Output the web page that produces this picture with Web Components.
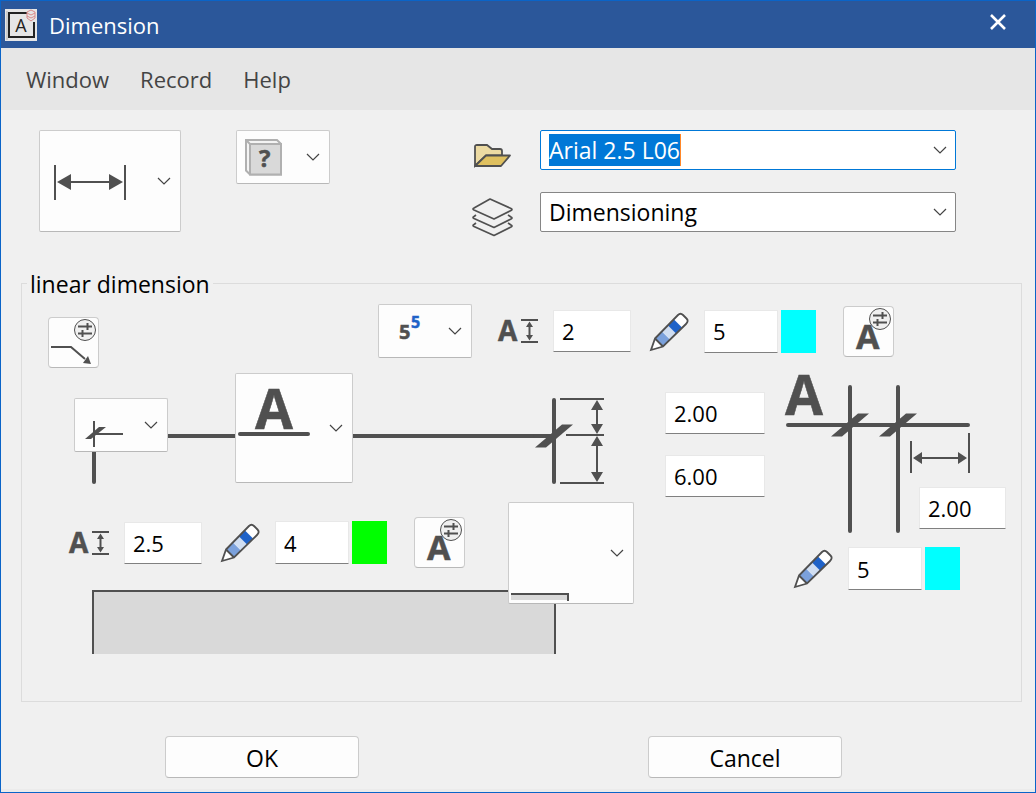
<!DOCTYPE html>
<html lang="en">
<head>
<meta charset="utf-8">
<meta name="viewport" content="width=device-width">
<title>Dimension</title>
<style>
html, body { margin: 0; min-height: 100%; }
body { min-height: 100vh; display: flex; background: #f0f0f0; font: 22px/30px "Open Sans", "Noto Sans", sans-serif; color: #000; }
</style>
</head>
<body>
<dimension-dialog></dimension-dialog>
<script>
const INK = '#505050';

const knobs = `
  <circle cx="36" cy="12" r="10.5" fill="#f0f0f0" stroke="${INK}"/>
  <path d="M29 8.5H43M29 15.5H43" stroke="${INK}" stroke-width="2"/>
  <path d="M38.5 5V12M33.5 12V19" stroke="${INK}" stroke-width="2"/>`;

const letter = (x, y, size, text = 'A', fill = INK) =>
  `<text x="${x}" y="${y}" font-family="Open Sans, Noto Sans, sans-serif" font-weight="700" font-size="${size}" fill="${fill}" stroke="${fill}" stroke-width=".5">${text}</text>`;

/* name: [width, height, drawing] */
const ICONS = {
  app: [32, 32, `<path fill="#e6e6e6" d="M0 0H32V32H0Z"/><path fill="none" stroke="#b4b4b4" d="M2 31V2"/><path d="M22 4H4V28H29V13" fill="none" stroke="#222" stroke-width="2"/>
    <text x="16" y="23" text-anchor="middle" font-family="Open Sans, sans-serif" font-size="18" fill="#222">A</text>
    <g fill="none" stroke="#d98a8a"><path d="M22 3L26 1L30 3V9L26 12L22 9Z"/><path d="M22 4L26 6L30 4M22 7L26 9L30 7"/></g>`],
  close: [16, 16, `<path d="M1 1L15 15M15 1L1 15" stroke="#fff" stroke-width="2.6"/>`],
  chevron: [14, 8, `<path d="M1 1L7 7L13 1" fill="none" stroke="#444" stroke-width="1.2"/>`],
  span: [110, 100, `<path d="M15 34V69M85 34V69M30 51H70" stroke="${INK}" stroke-width="2"/><path fill="${INK}" d="M17 51L31 43V59ZM83 51L69 43V59Z"/>`],
  cube: [62, 52, `<path d="M9 9H40L44 13V43.5H13L9 39.5Z" fill="#f4f4f4" stroke="#b0b0b0" stroke-width="2"/><path d="M13 13H44V43.5H13ZL9 9" fill="#d9d9d9" stroke="#b0b0b0" stroke-width="2"/>${letter(22, 36, 24, '?')}`],
  power: [62, 52, letter(20, 34, 20, '5') + letter(32, 23, 16, '5', '#1f62c8')],
  tick: [62, 52, `<path d="M19 22V48M19 35H48" stroke="${INK}" stroke-width="2"/><path fill="${INK}" d="M10 40H16L31 28H24Z"/>`],
  above: [86, 108, `${letter(19, 55, 55)}<path d="M4 60H72" stroke="${INK}" stroke-width="4" stroke-linecap="round"/>`],
  corner: [86, 100, `<path fill="#d9d9d9" d="M2 91H59V97H2Z"/><path d="M2 91H59V98" fill="none" stroke="${INK}" stroke-width="2"/>`],
  leader: [49, 49, `<path d="M2 29H22L36 41" fill="none" stroke="${INK}" stroke-width="2"/><path fill="${INK}" d="M42 46L34 45L39 38Z"/>${knobs}`],
  textStyle: [49, 49, letter(12, 42, 34) + knobs],
  textHeight: [40, 24, `${letter(0, 22, 28)}<path d="M23 1H40M23 23H40M31.500 5V19" stroke="${INK}" stroke-width="2"/><path fill="${INK}" d="M31.500 2.500L35 8H28ZM31.500 21.500L35 16H28Z"/>`],
  pencil: [39, 39, `<path fill="#fff" d="M5 26.500L28 3Q31 0 34 3L36.500 5.500Q39 8 36 11L13 34.500L1 38Z"/>
    <path fill="#7ba1dc" d="M5 26.500L12 19.500L20 27.500L13 34.500Z"/><path fill="#d0def2" d="M12 19.500L18 13.500L26 21.500L20 27.500Z"/><path fill="#1f62c8" d="M18 13.500L24 7.500L32 15.500L26 21.500Z"/>
    <path fill="none" stroke="${INK}" stroke-width="1.800" d="M5 26.500L28 3Q30.500 .5 33 3L36.500 6.500Q39 9 36 12L13 34.500L1 38ZL13 34.500"/>`],
  folder: [37, 23, `<path fill="#ecdaa2" stroke="${INK}" stroke-width="1.800" d="M1 22V2.500Q1 1 3 1H13L18 5H26Q28 5 28 7V11.500H12Z"/><path fill="#dfc05f" stroke="${INK}" stroke-width="1.800" stroke-linejoin="round" d="M1 22L12 11.500H36L27 22Z"/>`],
  layers: [41, 39, `<g fill="none" stroke="${INK}" stroke-width="1.700" stroke-linejoin="round"><path d="M18 1L39 10.500Q41 11.500 39 12.500L22 21L2 12Q0 11 2 10Z"/><path d="M4 17L2 18.500Q0 19.500 2 20.500L22 29.500L39 21Q41 20 39 19L36 17"/><path d="M4 25L2 26.500Q0 27.500 2 28.500L22 37.500L39 29Q41 28 39 27L36 25"/></g>`],
  offsets: [72, 112, `<path d="M0 63H19M19 27V109" stroke="${INK}" stroke-width="4" stroke-linecap="round"/><path fill="${INK}" d="M0 74.500H11L38 51.500H27Z"/>
    <path d="M25 26H69M31 62H69M25 110H69M62 32V56M62 70V104" stroke="${INK}" stroke-width="2"/>
    <path fill="${INK}" d="M62 27L68 37H56ZM62 61L68 51H56ZM62 63L68 73H56ZM62 109L68 99H56Z"/>`],
  extension: [186, 160, `${letter(0, 40, 55)}<path d="M3 50H183M65 12V156M113 12V156" stroke="${INK}" stroke-width="4" stroke-linecap="round"/>
    <path fill="${INK}" d="M46 61.500H57L84 38.500H73ZM94 61.500H105L132 38.500H121Z"/>
    <path d="M126 66V98M184 58V98M136 83H174" stroke="${INK}" stroke-width="2"/><path fill="${INK}" d="M128 83L137 77V89ZM182 83L173 77V89Z"/>`],
};

function define(name, render) {
  customElements.define(name, class extends HTMLElement {
    connectedCallback() {
      if (this.shadowRoot) return;
      const attr = (key, fallback = '') => this.getAttribute(key) ?? fallback;
      this.attachShadow({ mode: 'open' }).innerHTML =
        `<style>*{box-sizing:border-box}button,input,select{font:inherit;color:inherit;margin:0}</style>` + render(attr);
    }
  });
}

define('ui-icon', attr => {
  const [w, h, art] = ICONS[attr('name')];
  return `<style>:host{display:block;flex:none}svg{display:block;overflow:visible}</style>
    <svg width="${w}" height="${h}" viewBox="0 0 ${w} ${h}" aria-hidden="true">${art}</svg>`;
});

define('title-bar', () => `
  <style>
    :host{display:flex;align-items:center;height:47px;padding:0 29px 0 4px;background:#2b579a;color:#fff}
    h1{flex:1;margin:0 0 0 12px;font-size:inherit;font-weight:400}
    button{padding:0;border:0;background:none;margin-bottom:6px}
  </style>
  <ui-icon name="app"></ui-icon><h1><slot></slot></h1>
  <button type="button" aria-label="Close"><ui-icon name="close"></ui-icon></button>`);

define('menu-bar', () => `
  <style>
    :host{display:block;background:#e6e6e6;color:#444}
    nav{display:flex;align-items:center;gap:31px;height:62px;padding:0 25px}
  </style>
  <nav><slot></slot></nav>`);

define('menu-item', () => `
  <style>:host{display:block}button{padding:0;border:0;background:none;display:block}</style>
  <button type="button" aria-haspopup="menu"><slot></slot></button>`);

define('picture-picker', attr => `
  <style>
    :host{display:block;flex:none}
    button{display:flex;justify-content:space-between;align-items:center;width:100%;padding:0 9px 0 0;background:#fdfdfd;border:1px solid #ccc;border-bottom-color:#b8b8b8;border-radius:2px}
  </style>
  <button type="button" aria-haspopup="listbox" aria-label="${attr('label')}"><ui-icon name="${attr('icon')}"></ui-icon><ui-icon name="chevron"></ui-icon></button>`);

define('tool-button', attr => `
  <style>:host{display:block;flex:none}button{display:block;padding:0;background:#fdfdfd;border:1px solid #ccc;border-bottom-color:#b8b8b8;border-radius:4px}</style>
  <button type="button" aria-label="${attr('label')}"><ui-icon name="${attr('icon')}"></ui-icon></button>`);

const box = `input{width:100%;height:42px;padding:0 8px;background:#fff;border:1px solid #e8e8e8;border-bottom-color:#808080;border-radius:1px;outline:0}`;

define('value-field', attr => `
  <style>:host{display:block}${box}</style>
  <input type="text" inputmode="decimal" aria-label="${attr('label')}" value="${attr('value')}">`);

define('height-field', attr => `
  <style>:host{display:flex;align-items:center;gap:15px}${box}input{width:78px}</style>
  <label for="v" aria-label="Text height"><ui-icon name="textHeight"></ui-icon></label>
  <input id="v" type="text" inputmode="decimal" value="${attr('value')}">`);

define('pen-field', attr => `
  <style>
    :host{display:flex;align-items:center}
    ${box}input{width:74px;height:43px;margin:0 3px 0 15px}
    span{width:35px;height:43px;background:${attr('color')}}
  </style>
  <label for="v" aria-label="Pen"><ui-icon name="pencil"></ui-icon></label>
  <input id="v" type="text" inputmode="numeric" value="${attr('value')}"><span></span>`);

define('style-combo', attr => `
  <style>
    :host{display:flex;align-items:center;justify-content:space-between;height:40px;padding:0 8px;background:#fff;border:1px solid #0078d7;border-radius:2px;box-sizing:border-box}
    input{field-sizing:content;height:32px;padding:0;border:0;border-right:1px solid #ff8728;background:#0078d7;color:#fff;outline:0}
    button{padding:0;border:0;background:none}
  </style>
  <input type="text" role="combobox" aria-expanded="false" aria-label="${attr('label')}" value="${attr('value')}">
  <button type="button" aria-label="Show styles"><ui-icon name="chevron"></ui-icon></button>`);

define('layer-select', attr => `
  <style>
    :host{display:grid;align-items:center}
    select{grid-area:1/1;appearance:none;width:100%;height:40px;padding:0 30px 0 8px;background:#fff;border:1px solid #868686;border-radius:2px;outline:0}
    ui-icon{grid-area:1/1;justify-self:end;margin-right:9px;pointer-events:none}
  </style>
  <select aria-label="${attr('label')}"><option>${attr('value')}</option></select><ui-icon name="chevron"></ui-icon>`);

define('push-button', () => `
  <style>:host{display:block;width:194px;font-size:23px}button{width:100%;height:42px;padding:2px 0 0;background:#fdfdfd;border:1px solid #ccc;border-bottom-color:#b8b8b8;border-radius:4px}</style>
  <button type="button"><slot></slot></button>`);

define('general-settings', () => `
  <style>
    :host{display:flex;align-items:flex-start;padding:20px 79px 0 38px;font-size:23px}
    .kind{width:142px;margin-right:55px}.symbol{width:94px}
    .choices{flex:1;display:grid;grid-template:40px 40px/40px 1fr;column-gap:28px;row-gap:22px;align-items:center;margin-left:142px}
    .choices ui-icon{justify-self:center}
    .choices [name=folder],.choices [name=layers]{margin-top:10px}
  </style>
  <picture-picker class="kind" icon="span" label="Dimension type"></picture-picker>
  <picture-picker class="symbol" icon="cube" label="Marker"></picture-picker>
  <div class="choices">
    <ui-icon name="folder"></ui-icon><style-combo label="Style" value="Arial 2.5 L06"></style-combo>
    <ui-icon name="layers"></ui-icon><layer-select label="Layer" value="Dimensioning"></layer-select>
  </div>`);

define('line-diagram', () => `
  <style>
    :host{display:flex;align-items:flex-start;padding:0 27px 0 5px;height:110px}
    .start{width:94px;margin-top:25px}
    .leg{width:4px;height:32px;margin-left:18px;background:${INK};border-radius:0 0 2px 2px}
    .rule{flex:1;height:4px;margin-top:61px;background:${INK}}
    .short{flex:0 0 67px}
    .text{width:118px}
  </style>
  <div class="start"><picture-picker icon="tick" label="Line end"></picture-picker><div class="leg"></div></div>
  <div class="rule short"></div>
  <picture-picker class="text" icon="above" label="Text position"></picture-picker>
  <div class="rule"></div>
  <ui-icon name="offsets"></ui-icon>`);

define('text-settings', () => `
  <style>
    :host{display:grid;grid-template-columns:1fr 48px 78px;grid-template-rows:88px 12px 52px}
    .tools{grid-area:1/1/2/2;display:flex;align-items:center;height:51px;margin-top:15px}
    pen-field{margin:0 27px 0 19px}
    .wall{grid-area:2/1/4/3;margin-left:23px;background:#d9d9d9;border:2px solid ${INK};border-bottom:0}
    .hatch{grid-area:1/2/3/4;z-index:1}
  </style>
  <div class="tools">
    <height-field value="2.5"></height-field>
    <pen-field value="4" color="#00ff00"></pen-field>
    <tool-button icon="textStyle" label="Text style"></tool-button>
  </div>
  <div class="wall"></div>
  <picture-picker class="hatch" icon="corner" label="Component"></picture-picker>`);

define('extension-settings', () => `
  <style>
    :host{display:block}
    .figure{display:grid;margin-top:2px}
    .figure>*{grid-area:1/1}
    .figure value-field{width:87px;justify-self:end;align-self:end;margin-bottom:6px}
    pen-field{margin:12px 0 0 9px}
  </style>
  <div class="figure"><ui-icon name="extension"></ui-icon><value-field label="Extension distance" value="2.00"></value-field></div>
  <pen-field value="5" color="#00ffff"></pen-field>`);

define('linear-settings', () => `
  <style>
    :host{display:block;padding:35px 13px 0 20px}
    fieldset{min-width:0;margin:0;padding:5px 0 47px;border:1px solid #dcdcdc}
    legend{margin-left:5px;padding:2px 3px 0;font-size:23px}
    .top{display:flex;align-items:center;height:54px;padding:0 127px 0 26px}
    .top [icon=leader]{margin:22px auto 0 0}
    .top height-field{margin:0 19px 0 26px}
    .top tool-button[icon=textStyle]{margin-left:27px}
    .number{width:94px}
    .main{display:grid;grid-template-columns:1fr 100px 221px;column-gap:20px;margin-top:15px;padding:0 15px 0 47px}
    .left{display:grid;row-gap:19px;margin-right:11px;align-content:start}
    .offsets{display:grid;row-gap:21px;align-content:start;margin-top:19px}
  </style>
  <fieldset>
    <legend>linear dimension</legend>
    <div class="top">
      <tool-button icon="leader" label="Leader settings"></tool-button>
      <picture-picker class="number" icon="power" label="Number format"></picture-picker>
      <height-field value="2"></height-field>
      <pen-field value="5" color="#00ffff"></pen-field>
      <tool-button icon="textStyle" label="Superscript style"></tool-button>
    </div>
    <div class="main">
      <div class="left"><line-diagram></line-diagram><text-settings></text-settings></div>
      <div class="offsets">
        <value-field label="Length above line" value="2.00"></value-field>
        <value-field label="Length below line" value="6.00"></value-field>
      </div>
      <extension-settings></extension-settings>
    </div>
  </fieldset>`);

define('dimension-dialog', () => `
  <style>
    :host{display:flex;flex-direction:column;flex:1;min-width:0;border:1px solid #0a64c8;box-sizing:border-box}
    main{flex:1;border-bottom:3px solid #ebebeb;padding-bottom:10px}
    footer{display:flex;justify-content:space-between;padding:34px 193px 0 164px}
  </style>
  <title-bar>Dimension</title-bar>
  <menu-bar><menu-item>Window</menu-item><menu-item>Record</menu-item><menu-item>Help</menu-item></menu-bar>
  <main>
    <general-settings></general-settings>
    <linear-settings></linear-settings>
    <footer><push-button>OK</push-button><push-button>Cancel</push-button></footer>
  </main>`);
</script>
</body>
</html>
